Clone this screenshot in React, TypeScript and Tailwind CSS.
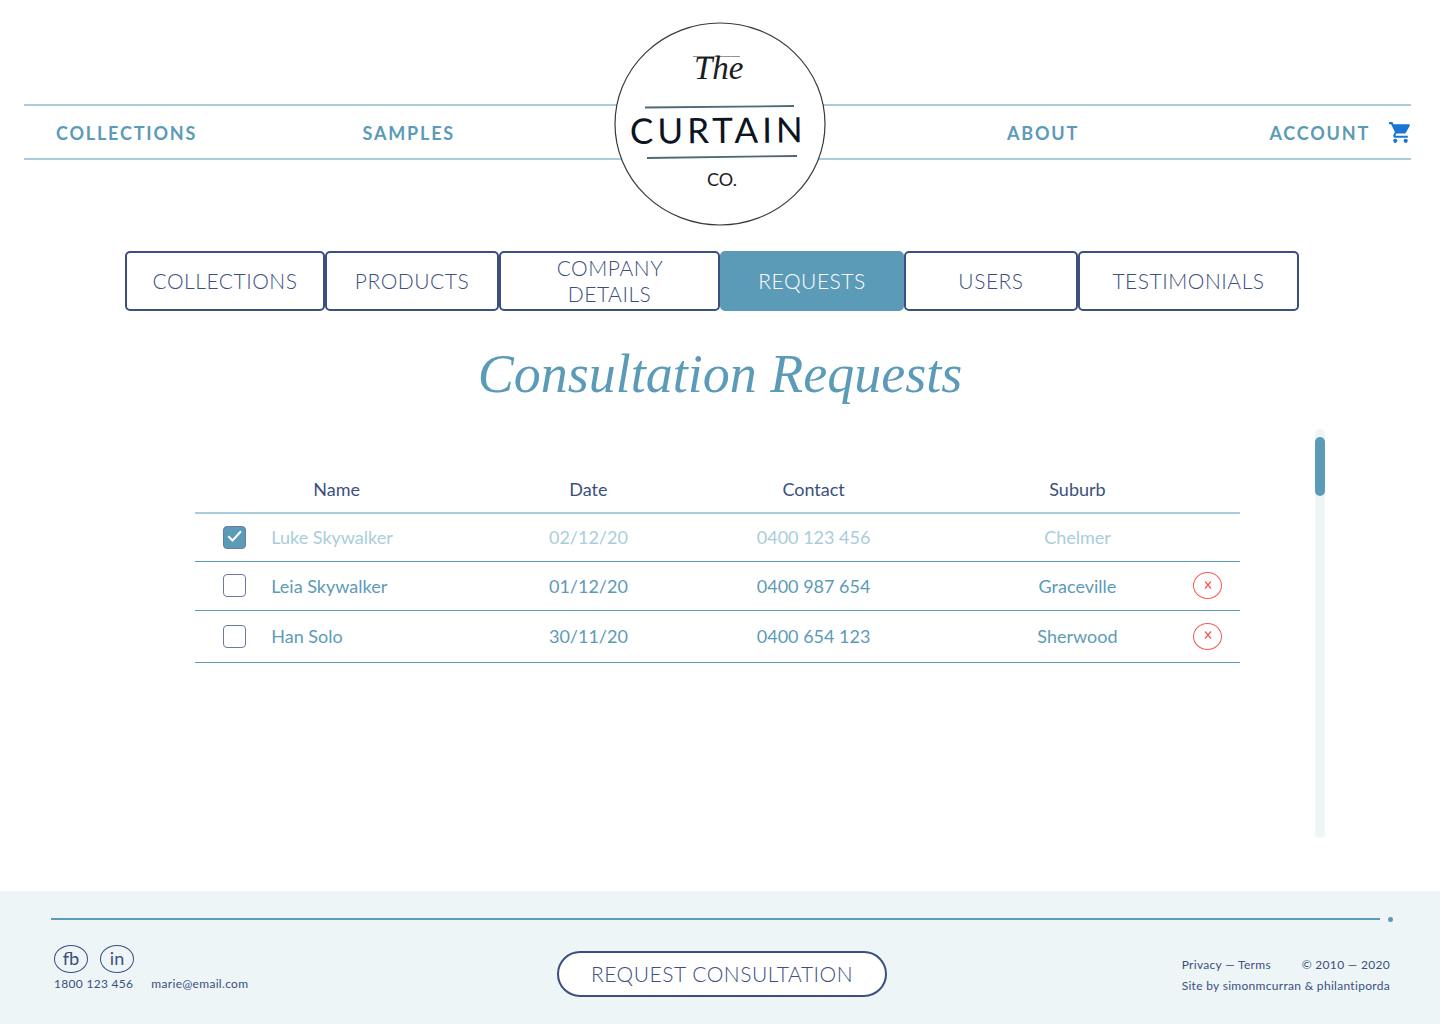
import { useState } from "react";
import { MdShoppingCart } from "react-icons/md";

type Request = {
  id: number;
  name: string;
  date: string;
  contact: string;
  suburb: string;
  done: boolean;
};

const initialRequests: Request[] = [
  { id: 1, name: "Luke Skywalker", date: "02/12/20", contact: "0400 123 456", suburb: "Chelmer", done: true },
  { id: 2, name: "Leia Skywalker", date: "01/12/20", contact: "0400 987 654", suburb: "Graceville", done: false },
  { id: 3, name: "Han Solo", date: "30/11/20", contact: "0400 654 123", suburb: "Sherwood", done: false },
];

const tabs = ["COLLECTIONS", "PRODUCTS", "COMPANY DETAILS", "REQUESTS", "USERS", "TESTIMONIALS"];

function Logo() {
  return (
    <svg viewBox="0 0 212 204" className="h-[204px] w-[212px]" role="img" aria-label="The Curtain Co.">
      <ellipse cx="106" cy="102" rx="105" ry="101" fill="#fff" stroke="#3a3a3c" strokeWidth="1.2" />
      <path d="M79 34.500H126" stroke="#777" strokeWidth="0.8" />
      <text x="80" y="57" fontFamily="'Liberation Serif', serif" fontStyle="italic" fontSize="33" fill="#1c1c20">
        The
      </text>
      <path d="M31 85.500L180 84" stroke="#4d6a75" strokeWidth="1.8" />
      <text
        x="16"
        y="121"
        fontFamily="Lato, sans-serif"
        fontSize="35"
        letterSpacing="4"
        fill="#0c1424"
        transform="rotate(-0.4 106 108)"
      >
        CURTAIN
      </text>
      <path d="M33 136L183 134" stroke="#4d6a75" strokeWidth="1.8" />
      <text x="93" y="164" fontFamily="Lato, sans-serif" fontSize="18" fill="#1c1c20">
        CO.
      </text>
    </svg>
  );
}

function Header() {
  return (
    <header className="relative pt-[104px]">
      <nav
        aria-label="Main"
        className="ml-6 mr-[29px] flex h-14 items-center justify-between border-y-2 border-[#a9cddb] pl-8 pt-0.5 text-lg font-bold tracking-widest text-[#5c9bb8]"
      >
        <div className="flex basis-[399px] justify-between">
          <a href="#collections">COLLECTIONS</a>
          <a href="#samples">SAMPLES</a>
        </div>
        <div className="flex basis-[404px] items-center justify-between">
          <a href="#about">ABOUT</a>
          <div className="-mr-0.5 flex items-center gap-[18px]">
            <a href="#account">ACCOUNT</a>
            <a href="#cart" aria-label="Cart" className="pb-0.5 text-[#1976d2]">
              <MdShoppingCart size={25} />
            </a>
          </div>
        </div>
      </nav>
      <a href="#home" className="absolute left-1/2 top-[22px] -translate-x-1/2">
        <Logo />
      </a>
    </header>
  );
}

function Tabs() {
  const [active, setActive] = useState("REQUESTS");
  return (
    <div className="ml-[125px] mr-[141px] mt-[91px] grid grid-cols-[200fr_174fr_221fr_184fr_174fr_221fr]">
      {tabs.map((tab) => (
        <button
          key={tab}
          type="button"
          aria-pressed={tab === active}
          onClick={() => setActive(tab)}
          className={
            tab === active
              ? "flex h-[60px] items-center justify-center rounded-[5px] border-2 border-[#5c9bb8] bg-[#5c9bb8] px-2 text-center text-[21px] font-light leading-[26px] tracking-wide text-white"
              : "flex h-[60px] items-center justify-center rounded-[5px] border-2 border-[#3c4f80] bg-white px-2 text-center text-[21px] font-light leading-[26px] tracking-wide text-[#3c4f80]"
          }
        >
          <span className={tab === "COMPANY DETAILS" ? "w-min" : ""}>{tab}</span>
        </button>
      ))}
    </div>
  );
}

function RequestsTable() {
  const [rows, setRows] = useState(initialRequests);
  const toggle = (id: number) => setRows(rows.map((r) => (r.id === id ? { ...r, done: !r.done } : r)));
  const remove = (id: number) => setRows(rows.filter((r) => r.id !== id));

  return (
    <table className="mt-9 flex-1 table-fixed border-collapse self-start text-lg">
      <colgroup>
        <col className="w-[7.3%]" />
        <col className="w-[24.7%]" />
        <col className="w-[11.3%]" />
        <col className="w-[31.8%]" />
        <col className="w-[18.7%]" />
        <col className="w-[6.2%]" />
      </colgroup>
      <thead>
        <tr className="h-12 border-b-2 border-[#a9cddb] text-[#3c4f80]">
          <td />
          <th className="pl-[42px] text-left font-normal">Name</th>
          <th className="font-normal">Date</th>
          <th className="font-normal">Contact</th>
          <th className="font-normal">Suburb</th>
          <td />
        </tr>
      </thead>
      <tbody>
        {rows.map((row) => (
          <tr
            key={row.id}
            className={
              row.done
                ? "h-12 border-b border-[#5c9bb8] text-center text-[#a9cddb]"
                : "h-[49px] border-b border-[#5c9bb8] text-center text-[#5c9bb8] last:h-[52px]"
            }
          >
            <td>
              <span className="relative ml-7 block size-[23px]">
                <input
                  id={`request-${row.id}`}
                  type="checkbox"
                  checked={row.done}
                  onChange={() => toggle(row.id)}
                  className="block size-[23px] appearance-none rounded-[4px] border border-[#6c7aa0] bg-white checked:bg-[#5c9bb8]"
                />
                {row.done && (
                  <svg viewBox="0 0 23 23" className="pointer-events-none absolute inset-0" fill="none" stroke="#fff" strokeWidth="2">
                    <path d="M5.300 10.200L9.500 14.500L18 5.300" />
                  </svg>
                )}
              </span>
            </td>
            <td className="text-left">
              <label htmlFor={`request-${row.id}`}>{row.name}</label>
            </td>
            <td className="whitespace-nowrap">{row.date}</td>
            <td>{row.contact}</td>
            <td>{row.suburb}</td>
            <td>
              {!row.done && (
                <button
                  type="button"
                  aria-label={`Remove ${row.name}`}
                  onClick={() => remove(row.id)}
                  className="mx-auto flex h-[27px] w-[29px] items-center justify-center rounded-[50%] border border-[#f95a5a] pb-0.5 text-[#f95a5a]"
                >
                  <svg viewBox="0 0 8 8" className="size-2" fill="none" stroke="currentColor" strokeWidth="1.3">
                    <path d="M1 0.500L7 7.500M7 0.500L1 7.500" />
                  </svg>
                </button>
              )}
            </td>
          </tr>
        ))}
      </tbody>
    </table>
  );
}

function Footer() {
  return (
    <footer className="bg-[#edf5f7] pb-[27px] pl-[51px] pr-[47px] pt-6 text-[#3c4f80]">
      <div className="flex items-center gap-2">
        <div className="my-[3px] h-0.5 flex-1 bg-[#5c9bb8]" />
        <div className="size-[5px] rounded-full bg-[#5c9bb8]" />
      </div>
      <div className="mt-[22px] grid grid-cols-[1fr_auto_1fr] items-start px-[3px]">
        <div>
          <div className="flex gap-3 text-lg">
            <a href="#facebook" className="flex h-7 w-[34px] items-center justify-center rounded-[50%] border border-[#3c4f80] pb-0.5">
              fb
            </a>
            <a href="#linkedin" className="flex h-7 w-[34px] items-center justify-center rounded-[50%] border border-[#3c4f80] pb-0.5">
              in
            </a>
          </div>
          <div className="mt-[3px] flex gap-[18px] text-xs tracking-wide">
            <a href="tel:1800123456">1800 123 456</a>
            <a href="mailto:marie@email.com">marie@email.com</a>
          </div>
        </div>
        <button
          type="button"
          className="mt-1.5 h-[46px] rounded-full border-2 border-[#3c4f80] bg-white px-8 text-[21px] font-light tracking-wide"
        >
          REQUEST CONSULTATION
        </button>
        <div className="mt-[9px] justify-self-end text-xs leading-[21px] tracking-wide">
          <div className="flex justify-between">
            <span>
              <a href="#privacy">Privacy</a> — <a href="#terms">Terms</a>
            </span>
            <span>© 2010 — 2020</span>
          </div>
          <p>Site by simonmcurran &amp; philantiporda</p>
        </div>
      </div>
    </footer>
  );
}

export default function App() {
  return (
    <div className="flex min-h-screen flex-col bg-white font-['Lato',sans-serif]">
      <Header />
      <Tabs />
      <main className="flex flex-1 flex-col">
        <h1 className="mb-1.5 mt-3.5 text-center font-['Liberation_Serif',serif] text-[54px] italic leading-[98px] text-[#5c9bb8]">
          Consultation Requests
        </h1>
        <div className="mb-[53px] ml-[195px] mr-[115px] flex flex-1 gap-[75px]">
          <RequestsTable />
          <div className="w-2.5 rounded-full bg-[#edf5f7] pt-2">
            <div className="h-[59px] rounded-full bg-[#5c9bb8]" />
          </div>
        </div>
      </main>
      <Footer />
    </div>
  );
}
